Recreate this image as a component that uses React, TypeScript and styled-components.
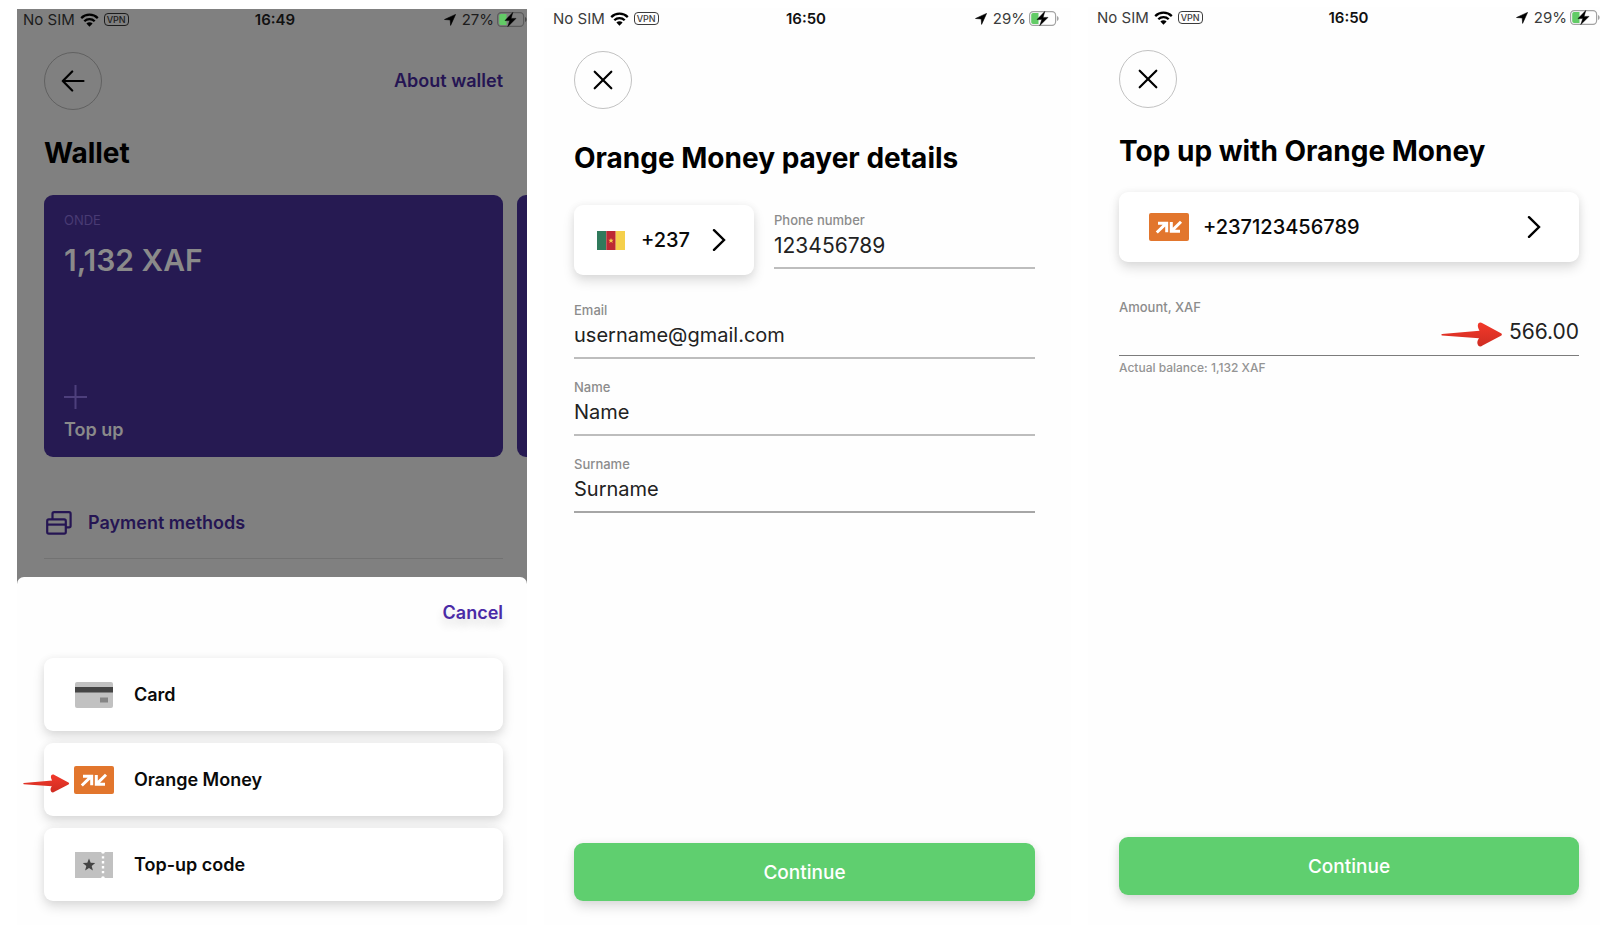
import React from "react";
import styled, { createGlobalStyle, css } from "styled-components";

const GlobalStyle = createGlobalStyle`
  *, *::before, *::after { box-sizing: border-box; }
  body {
    margin: 0;
    background: #fff;
    color: #0a0a0a;
    font-family: Inter, "Liberation Sans", Arial, sans-serif;
  }
  button, input { font: inherit; color: inherit; }
  h1, p { margin: 0; }
`;

const Gallery = styled.main`
  display: grid;
  grid-template-columns: 510fr 527fr 512fr;
  column-gap: 17px;
  min-height: 100vh;
  padding-left: 17px;
`;

const Screen = styled.section<{ $top: number; $dimmed?: boolean }>`
  display: flex;
  flex-direction: column;
  min-width: 0;
  margin-top: ${(p) => p.$top}px;
  overflow: hidden;
  background: ${(p) => (p.$dimmed ? "#808080" : "#fefefe")};
`;

/* Status bar */

const StatusRow = styled.header<{ $left: number; $right: number; $dimmed?: boolean }>`
  display: grid;
  grid-template-columns: 1fr auto 1fr;
  align-items: center;
  height: 21px;
  padding: 0 ${(p) => p.$right}px 0 ${(p) => p.$left}px;
  font-size: 15px;
  color: ${(p) => (p.$dimmed ? "#1c1c1c" : "#3c3c3c")};
`;

const StatusGroup = styled.div<{ $end?: boolean }>`
  display: flex;
  align-items: center;
  justify-content: ${(p) => (p.$end ? "flex-end" : "flex-start")};
  gap: ${(p) => (p.$end ? 3 : 5)}px;
  white-space: nowrap;
`;

const Clock = styled.time`
  font-weight: 600;
  color: #111;
`;

const VpnTag = styled.span`
  padding: 0 2px;
  border: 1px solid currentColor;
  border-radius: 4px;
  font-size: 9px;
  line-height: 11px;
  font-weight: 500;
`;

const Percent = styled.span`
  margin-left: 3px;
`;

const WifiIcon = () => (
  <svg width="19" height="14" viewBox="0 0 19 14" aria-hidden="true">
    <g fill="none" stroke="#000" strokeWidth="2.3">
      <path d="M1.2 5.1a11.8 11.8 0 0 1 16.6 0" />
      <path d="M4.3 8.3a7.4 7.4 0 0 1 10.4 0" />
    </g>
    <path d="M9.5 13.8 6.4 10.6a4.4 4.4 0 0 1 6.2 0z" fill="#000" />
  </svg>
);

const LocationIcon = () => (
  <svg width="12" height="12" viewBox="0 0 12 12" aria-hidden="true">
    <path d="M11.6.4 6.6 11.4 6.2 5.9.5 5.5z" fill="#000" stroke="#000" strokeWidth=".6" strokeLinejoin="round" />
  </svg>
);

const BatteryIcon = ({ dimmed }: { dimmed?: boolean }) => (
  <svg width="30" height="15" viewBox="0 0 30 15" aria-hidden="true">
    <rect x=".6" y=".6" width="26" height="13.8" rx="3.6" fill="none" stroke={dimmed ? "#5c5c5c" : "#a2a2a2"} strokeWidth="1.2" />
    <path d="M28 5v5c1.2-.5 1.6-1.4 1.6-2.5S29.2 5.5 28 5z" fill={dimmed ? "#4a4a4a" : "#a2a2a2"} />
    <path d="M4 2h5.5v11H4a1.8 1.8 0 0 1-1.8-1.800V3.800A1.800 1.800 0 0 1 4 2z" fill="#62cb66" />
    <path d="M15.8.4 8 8.600h4.800L10.800 14.600l8.200-8.200h-4.900z" fill="#000" stroke="#000" strokeWidth=".5" strokeLinejoin="round" />
  </svg>
);

type StatusProps = { time: string; charge: string; left: number; right: number; dimmed?: boolean };

const StatusBar = ({ time, charge, left, right, dimmed }: StatusProps) => (
  <StatusRow $left={left} $right={right} $dimmed={dimmed}>
    <StatusGroup>
      <span>No SIM</span>
      <WifiIcon />
      <VpnTag>VPN</VpnTag>
    </StatusGroup>
    <Clock>{time}</Clock>
    <StatusGroup $end>
      <LocationIcon />
      <Percent>{charge}</Percent>
      <BatteryIcon dimmed={dimmed} />
    </StatusGroup>
  </StatusRow>
);

/* Shared parts */

const Content = styled.div<{ $left: number; $right: number; $bottom?: number }>`
  display: flex;
  flex: 1;
  flex-direction: column;
  padding: 22px ${(p) => p.$right}px ${(p) => p.$bottom ?? 0}px ${(p) => p.$left}px;
`;

const NavRow = styled.nav`
  display: flex;
  align-items: center;
  justify-content: space-between;
`;

const RoundButton = styled.button<{ $dimmed?: boolean }>`
  display: grid;
  place-items: center;
  width: 58px;
  height: 58px;
  padding: 0;
  border: 1px solid ${(p) => (p.$dimmed ? "#616161" : "#c2c2c2")};
  border-radius: 50%;
  background: transparent;
`;

const Title = styled.h1<{ $above: number; $below: number }>`
  margin: ${(p) => p.$above}px 0 ${(p) => p.$below}px;
  font-size: 28px;
  line-height: 36px;
  font-weight: 700;
  color: #000;
  white-space: nowrap;
`;

const raised = css`
  border: 0;
  border-radius: 9px;
  background: #fff;
  box-shadow: 0 6px 12px rgba(0, 0, 0, 0.13), 0 0 8px rgba(0, 0, 0, 0.05);
`;

const TextAction = styled.button<{ $dimmed?: boolean }>`
  padding: 0;
  border: 0;
  background: transparent;
  font-size: 18px;
  line-height: 24px;
  font-weight: 600;
  color: ${(p) => (p.$dimmed ? "#251553" : "#4a2aa6")};
  text-shadow: ${(p) => (p.$dimmed ? "none" : "0 6px 10px rgba(0, 0, 0, 0.16)")};
`;

const ContinueButton = styled.button`
  ${raised}
  flex: none;
  height: 58px;
  margin-top: auto;
  background: #5fcf6f;
  color: #fff;
  font-size: 19px;
  font-weight: 500;
`;

const CloseIcon = () => (
  <svg width="20" height="20" viewBox="0 0 20 20" aria-hidden="true">
    <path d="m1.700 1.700 16.600 16.600M18.300 1.700 1.700 18.300" stroke="#000" strokeWidth="2.200" strokeLinecap="round" />
  </svg>
);

const BackIcon = () => (
  <svg width="24" height="22" viewBox="0 0 24 22" aria-hidden="true">
    <path d="M22.500 11H1.800M11.200 1.500 1.800 11l9.400 9.500" fill="none" stroke="#000" strokeWidth="2.200" strokeLinecap="round" strokeLinejoin="round" />
  </svg>
);

const ChevronIcon = () => (
  <svg width="14" height="22" viewBox="0 0 14 22" aria-hidden="true">
    <path d="m2 1.200 10 9.800L2 20.800" fill="none" stroke="#000" strokeWidth="2.400" strokeLinecap="round" />
  </svg>
);

const OrangeMoneyIcon = () => (
  <svg width="40" height="28" viewBox="0 0 40 28" aria-hidden="true">
    <rect width="40" height="28" rx="2" fill="#e2762d" />
    <g fill="none" stroke="#fff" strokeWidth="3">
      <path d="M7.800 19.500 17 10.700M9 10.200h8.700v9" />
      <path d="M32 8.800 23 17.600M22.300 9v9.300H31" />
    </g>
  </svg>
);

const RedArrow = ({ width }: { width: number }) => (
  <svg width={width} viewBox="0 0 62 25" aria-hidden="true">
    <defs>
      <linearGradient id="arrow-red" x1="0" y1="0" x2="0" y2="1">
        <stop offset="0" stopColor="#f2392a" />
        <stop offset="1" stopColor="#cf2c22" />
      </linearGradient>
    </defs>
    <path
      d="M1 12 C.2 12.400.2 13.200 1 13.500L38 16.300C36 19 35.800 21 37.200 23.500 38.500 24.700 40 24.700 41.500 23.500L60 13.700C61.200 12.900 61.200 12 60 11.200L41.500 1.200C39.800.2 38.300.4 37.300 1.600 36.200 3.800 37 6 38.500 8.700z"
      fill="url(#arrow-red)"
    />
  </svg>
);

/* Wallet screen */

const CardStrip = styled.div`
  display: flex;
  gap: 14px;
`;

const BalanceCard = styled.article`
  display: flex;
  flex: 0 0 100%;
  flex-direction: column;
  align-items: flex-start;
  height: 262px;
  padding: 17px 20px 15px;
  border-radius: 9px;
  background: #261a52;
  color: #8a8a8a;
`;

const CardOwner = styled.p`
  font-size: 13px;
  line-height: 16px;
  color: #493b74;
`;

const CardBalance = styled.p`
  margin-top: 14px;
  font-size: 30px;
  line-height: 36px;
  font-weight: 600;
`;

const TopUpButton = styled.button`
  display: flex;
  flex-direction: column;
  gap: 9px;
  margin-top: auto;
  padding: 0;
  border: 0;
  background: transparent;
  font-size: 18px;
  line-height: 24px;
  font-weight: 600;
`;

const PlusIcon = () => (
  <svg width="23" height="24" viewBox="0 0 23 24" aria-hidden="true">
    <path d="M0 12h23M11.500 0v24" stroke="#4d3f7c" strokeWidth="2" />
  </svg>
);

const PaymentRow = styled.div`
  margin-top: 30px;
  padding: 24px 0 23px 2px;
  border-bottom: 1px solid #727272;
`;

const PaymentLink = styled.a`
  display: flex;
  align-items: center;
  gap: 16px;
  font-size: 18px;
  line-height: 24px;
  font-weight: 600;
  color: #251553;
  text-decoration: none;
`;

const PaymentIcon = () => (
  <svg width="26" height="24" viewBox="0 0 26 24" fill="none" stroke="#251553" strokeWidth="2.200" strokeLinejoin="round" aria-hidden="true">
    <path d="M6.500 8V2.800A1.600 1.600 0 0 1 8.100 1.200H23A1.600 1.600 0 0 1 24.600 2.800V14.800A1.600 1.600 0 0 1 23 16.400H20" />
    <rect x="1.200" y="8.300" width="18.600" height="14.400" rx="1.600" />
    <path d="M1.200 13.600h18.600" />
  </svg>
);

const Sheet = styled.section`
  display: flex;
  flex-direction: column;
  gap: 12px;
  padding: 24px 24px 24px 27px;
  border-radius: 7px 7px 0 0;
  background: #fefefe;
`;

const SheetHead = styled.div`
  display: flex;
  justify-content: flex-end;
  margin-bottom: 21px;
`;

const MethodOption = styled.button`
  ${raised}
  position: relative;
  display: flex;
  align-items: center;
  gap: 20px;
  height: 73px;
  padding: 0 30px;
  font-size: 18px;
  font-weight: 600;
  text-align: left;
`;

const MethodIcon = styled.span`
  display: grid;
  place-items: center;
  width: 40px;
`;

const MethodPointer = styled.span`
  position: absolute;
  left: -21px;
  top: 31px;
  line-height: 0;
`;

const BankCardIcon = () => (
  <svg width="38" height="26" viewBox="0 0 38 26" aria-hidden="true">
    <rect width="38" height="26" rx="2" fill="#c1c1c1" />
    <path d="M0 5h38v5.500H0z" fill="#444" />
    <path d="M25 15.500h8v5h-8z" fill="#858585" />
  </svg>
);

const TicketIcon = () => (
  <svg width="38" height="26" viewBox="0 0 38 26" aria-hidden="true">
    <path d="M0 0h26.200a1.800 1.800 0 0 0 3.600 0H38v26h-8.200a1.800 1.800 0 0 0-3.600 0H0z" fill="#c1c1c1" />
    <path d="M28 4.200v19" stroke="#fff" strokeWidth="2.400" strokeDasharray="2.400 2.500" />
    <path d="m14 6.600 1.700 4.200 4.500.3-3.500 2.900 1.200 4.500-3.900-2.500-3.900 2.500 1.200-4.500-3.500-2.900 4.500-.3z" fill="#444" />
  </svg>
);

const WalletScreen = () => (
  <Screen $top={9} $dimmed>
    <StatusBar time="16:49" charge="27%" left={6} right={0} dimmed />
    <Content $left={27} $right={24}>
      <NavRow>
        <RoundButton $dimmed aria-label="Back">
          <BackIcon />
        </RoundButton>
        <TextAction $dimmed>About wallet</TextAction>
      </NavRow>
      <Title $above={25} $below={24}>Wallet</Title>
      <CardStrip>
        <BalanceCard>
          <CardOwner>ONDE</CardOwner>
          <CardBalance>1,132 XAF</CardBalance>
          <TopUpButton>
            <PlusIcon />
            Top up
          </TopUpButton>
        </BalanceCard>
        <BalanceCard aria-hidden="true" />
      </CardStrip>
      <PaymentRow>
        <PaymentLink href="#payment-methods">
          <PaymentIcon />
          Payment methods
        </PaymentLink>
      </PaymentRow>
    </Content>
    <Sheet>
      <SheetHead>
        <TextAction>Cancel</TextAction>
      </SheetHead>
      <MethodOption>
        <MethodIcon><BankCardIcon /></MethodIcon>
        Card
      </MethodOption>
      <MethodOption>
        <MethodPointer><RedArrow width={47} /></MethodPointer>
        <MethodIcon><OrangeMoneyIcon /></MethodIcon>
        Orange Money
      </MethodOption>
      <MethodOption>
        <MethodIcon><TicketIcon /></MethodIcon>
        Top-up code
      </MethodOption>
    </Sheet>
  </Screen>
);

/* Form fields */

const FieldBox = styled.div`
  display: flex;
  flex: 1;
  flex-direction: column;
  min-width: 0;
`;

const FieldLabel = styled.label`
  font-size: 13px;
  line-height: 16px;
  font-weight: 500;
  color: #8c8c8c;
`;

const FieldInput = styled.input<{ $line: string; $numeric?: boolean; $end?: boolean }>`
  width: 100%;
  height: 41px;
  padding: ${(p) => (p.$end ? "3px 0 10px" : "4px 0 9px")};
  border: 0;
  border-bottom: ${(p) => (p.$end ? 1 : 2)}px solid ${(p) => p.$line};
  border-radius: 0;
  outline: 0;
  background: transparent;
  font-size: ${(p) => (p.$numeric ? 21 : 20)}px;
  color: #222;
  text-align: ${(p) => (p.$end ? "right" : "left")};
`;

type FieldProps = { id: string; label: string; value: string; type?: string; line?: string };

const Field = ({ id, label, value, type = "text", line = "#bdbdbd" }: FieldProps) => (
  <FieldBox>
    <FieldLabel htmlFor={id}>{label}</FieldLabel>
    <FieldInput id={id} type={type} defaultValue={value} $line={line} $numeric={type === "tel"} />
  </FieldBox>
);

/* Payer details screen */

const PhoneRow = styled.div`
  display: flex;
  align-items: flex-start;
  gap: 20px;
  margin-bottom: 27px;
`;

const PhoneField = styled.div`
  display: flex;
  flex: 1;
  min-width: 0;
  padding-top: 7px;
`;

const CountryButton = styled.button`
  ${raised}
  display: flex;
  align-items: center;
  justify-content: space-between;
  width: 180px;
  height: 70px;
  padding: 0 28px 0 23px;
  font-size: 20px;
  font-weight: 500;
`;

const Dial = styled.span`
  display: flex;
  align-items: center;
  gap: 16px;
`;

const FieldStack = styled.div`
  display: flex;
  flex-direction: column;
  gap: 20px;
`;

const CameroonFlag = () => (
  <svg width="28" height="19" viewBox="0 0 28 19" aria-hidden="true">
    <path d="M0 0h9.300v19H0z" fill="#307a5c" />
    <path d="M9.300 0h9.400v19H9.300z" fill="#bd2933" />
    <path d="M18.700 0H28v19h-9.300z" fill="#f5d04b" />
    <path d="m14 7 .7 1.800h1.900l-1.500 1.200.6 1.900-1.700-1.100-1.700 1.100.6-1.900-1.500-1.200h1.900z" fill="#f5d04b" />
  </svg>
);

const PayerScreen = () => (
  <Screen $top={8}>
    <StatusBar time="16:50" charge="29%" left={9} right={12} />
    <Content $left={30} $right={36} $bottom={24}>
      <NavRow>
        <RoundButton aria-label="Close"><CloseIcon /></RoundButton>
      </NavRow>
      <Title $above={31} $below={29}>Orange Money payer details</Title>
      <PhoneRow>
        <CountryButton>
          <Dial>
            <CameroonFlag />
            +237
          </Dial>
          <ChevronIcon />
        </CountryButton>
        <PhoneField>
          <Field id="phone" label="Phone number" value="123456789" type="tel" />
        </PhoneField>
      </PhoneRow>
      <FieldStack>
        <Field id="email" label="Email" value="username@gmail.com" type="email" />
        <Field id="name" label="Name" value="Name" />
        <Field id="surname" label="Surname" value="Surname" line="#a6a6a6" />
      </FieldStack>
      <ContinueButton>Continue</ContinueButton>
    </Content>
  </Screen>
);

/* Top up screen */

const AccountButton = styled.button`
  ${raised}
  display: flex;
  flex: none;
  align-items: center;
  gap: 14px;
  height: 70px;
  padding: 0 38px 0 30px;
  margin-bottom: 37px;
  font-size: 20px;
  font-weight: 500;
`;

const AccountNumber = styled.span`
  flex: 1;
  text-align: left;
`;

const AmountBox = styled.div`
  position: relative;
  display: flex;
  flex-direction: column;
`;

const AmountPointer = styled.span`
  position: absolute;
  right: 76px;
  top: 23px;
  line-height: 0;
`;

const Hint = styled.p`
  margin-top: 4px;
  font-size: 12px;
  line-height: 16px;
  font-weight: 500;
  color: #949494;
`;

const TopUpScreen = () => (
  <Screen $top={7}>
    <StatusBar time="16:50" charge="29%" left={9} right={0} />
    <Content $left={31} $right={21} $bottom={30}>
      <NavRow>
        <RoundButton aria-label="Close"><CloseIcon /></RoundButton>
      </NavRow>
      <Title $above={25} $below={23}>Top up with Orange Money</Title>
      <AccountButton>
        <OrangeMoneyIcon />
        <AccountNumber>+237123456789</AccountNumber>
        <ChevronIcon />
      </AccountButton>
      <AmountBox>
        <FieldLabel htmlFor="amount">Amount, XAF</FieldLabel>
        <FieldInput id="amount" type="text" inputMode="decimal" defaultValue="566.00" $line="#7c7c7c" $numeric $end />
        <AmountPointer><RedArrow width={62} /></AmountPointer>
      </AmountBox>
      <Hint>Actual balance: 1,132 XAF</Hint>
      <ContinueButton>Continue</ContinueButton>
    </Content>
  </Screen>
);

export default function App() {
  return (
    <>
      <GlobalStyle />
      <Gallery>
        <WalletScreen />
        <PayerScreen />
        <TopUpScreen />
      </Gallery>
    </>
  );
}
